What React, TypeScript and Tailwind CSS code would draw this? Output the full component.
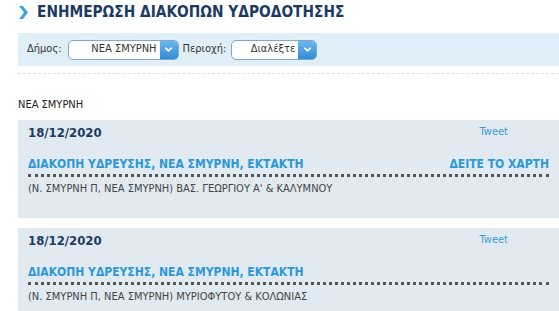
import { ChevronDown } from "lucide-react";

const items = [
  {
    date: "18/12/2020",
    title: "ΔΙΑΚΟΠΗ ΥΔΡΕΥΣΗΣ, ΝΕΑ ΣΜΥΡΝΗ, ΕΚΤΑΚΤΗ",
    desc: "(Ν. ΣΜΥΡΝΗ Π, ΝΕΑ ΣΜΥΡΝΗ) ΒΑΣ. ΓΕΩΡΓΙΟΥ Α' & ΚΑΛΥΜΝΟΥ",
    map: true,
  },
  {
    date: "18/12/2020",
    title: "ΔΙΑΚΟΠΗ ΥΔΡΕΥΣΗΣ, ΝΕΑ ΣΜΥΡΝΗ, ΕΚΤΑΚΤΗ",
    desc: "(Ν. ΣΜΥΡΝΗ Π, ΝΕΑ ΣΜΥΡΝΗ) ΜΥΡΙΟΦΥΤΟΥ & ΚΟΛΩΝΙΑΣ",
    map: false,
  },
];

function Select({ value, width }: { value: string; width: string }) {
  return (
    <div className={`flex h-[20px] ${width} overflow-hidden rounded-[5px] border border-[#7fa9cc] bg-white`}>
      <div className="flex flex-1 items-center justify-end pr-[3px] text-[11px] text-[#333]">{value}</div>
      <div className="flex w-[18px] items-center justify-center bg-gradient-to-b from-[#6cb6ea] to-[#2e8dd4]">
        <ChevronDown size={11} strokeWidth={3.5} color="white" />
      </div>
    </div>
  );
}

export default function App() {
  return (
    <div className="h-[311px] w-[559px] overflow-hidden bg-white pl-[18px] font-['DejaVu_Sans',sans-serif] font-stretch-condensed">
      <div className="flex h-[25px] items-center gap-[8px]">
        <svg width="11" height="13" viewBox="0 0 11 13">
          <path d="M1 0 H5 L10 6.5 L5 13 H1 L6 6.5 Z" fill="#3ea2df" />
        </svg>
        <h1 className="text-[15.3px] font-bold text-[#1c3b63]">ΕΝΗΜΕΡΩΣΗ ΔΙΑΚΟΠΩΝ ΥΔΡΟΔΟΤΗΣΗΣ</h1>
      </div>

      <div className="mt-[8px] flex h-[33px] items-center bg-[#e0eef8] pl-[9px] text-[11px] text-[#333]">
        <span>Δήμος:</span>
        <div className="ml-[6px]">
          <Select value="ΝΕΑ ΣΜΥΡΝΗ" width="w-[111px]" />
        </div>
        <span className="ml-[4px]">Περιοχή:</span>
        <div className="ml-[5px]">
          <Select value="Διαλέξτε" width="w-[86px]" />
        </div>
      </div>

      <div className="mt-[7px] border-t border-dashed border-[#f0d8dc]" />

      <div className="mt-[23px] text-[11px] text-[#222]">ΝΕΑ ΣΜΥΡΝΗ</div>

      <div className="mt-[6px] flex flex-col gap-[10px]">
        {items.map((it, i) => (
          <div key={i} className="h-[98px] bg-[#e1eaf0] px-[10px] pt-[3px]">
            <div className="flex items-start justify-between">
              <span className="text-[13px] font-bold text-[#1c3b63]">{it.date}</span>
              <span className="mr-[41px] mt-[1px] text-[11px] text-[#3d9ad8]">Tweet</span>
            </div>
            <div className="mt-[13px] flex justify-between border-b-[3px] border-dotted border-[#555] pb-[1px] text-[12px] font-bold text-[#2c98d8]">
              <span>{it.title}</span>
              {it.map && <span>ΔΕΙΤΕ ΤΟ ΧΑΡΤΗ</span>}
            </div>
            <div className="mt-[4px] text-[11px] text-[#444]">{it.desc}</div>
          </div>
        ))}
      </div>
    </div>
  );
}
